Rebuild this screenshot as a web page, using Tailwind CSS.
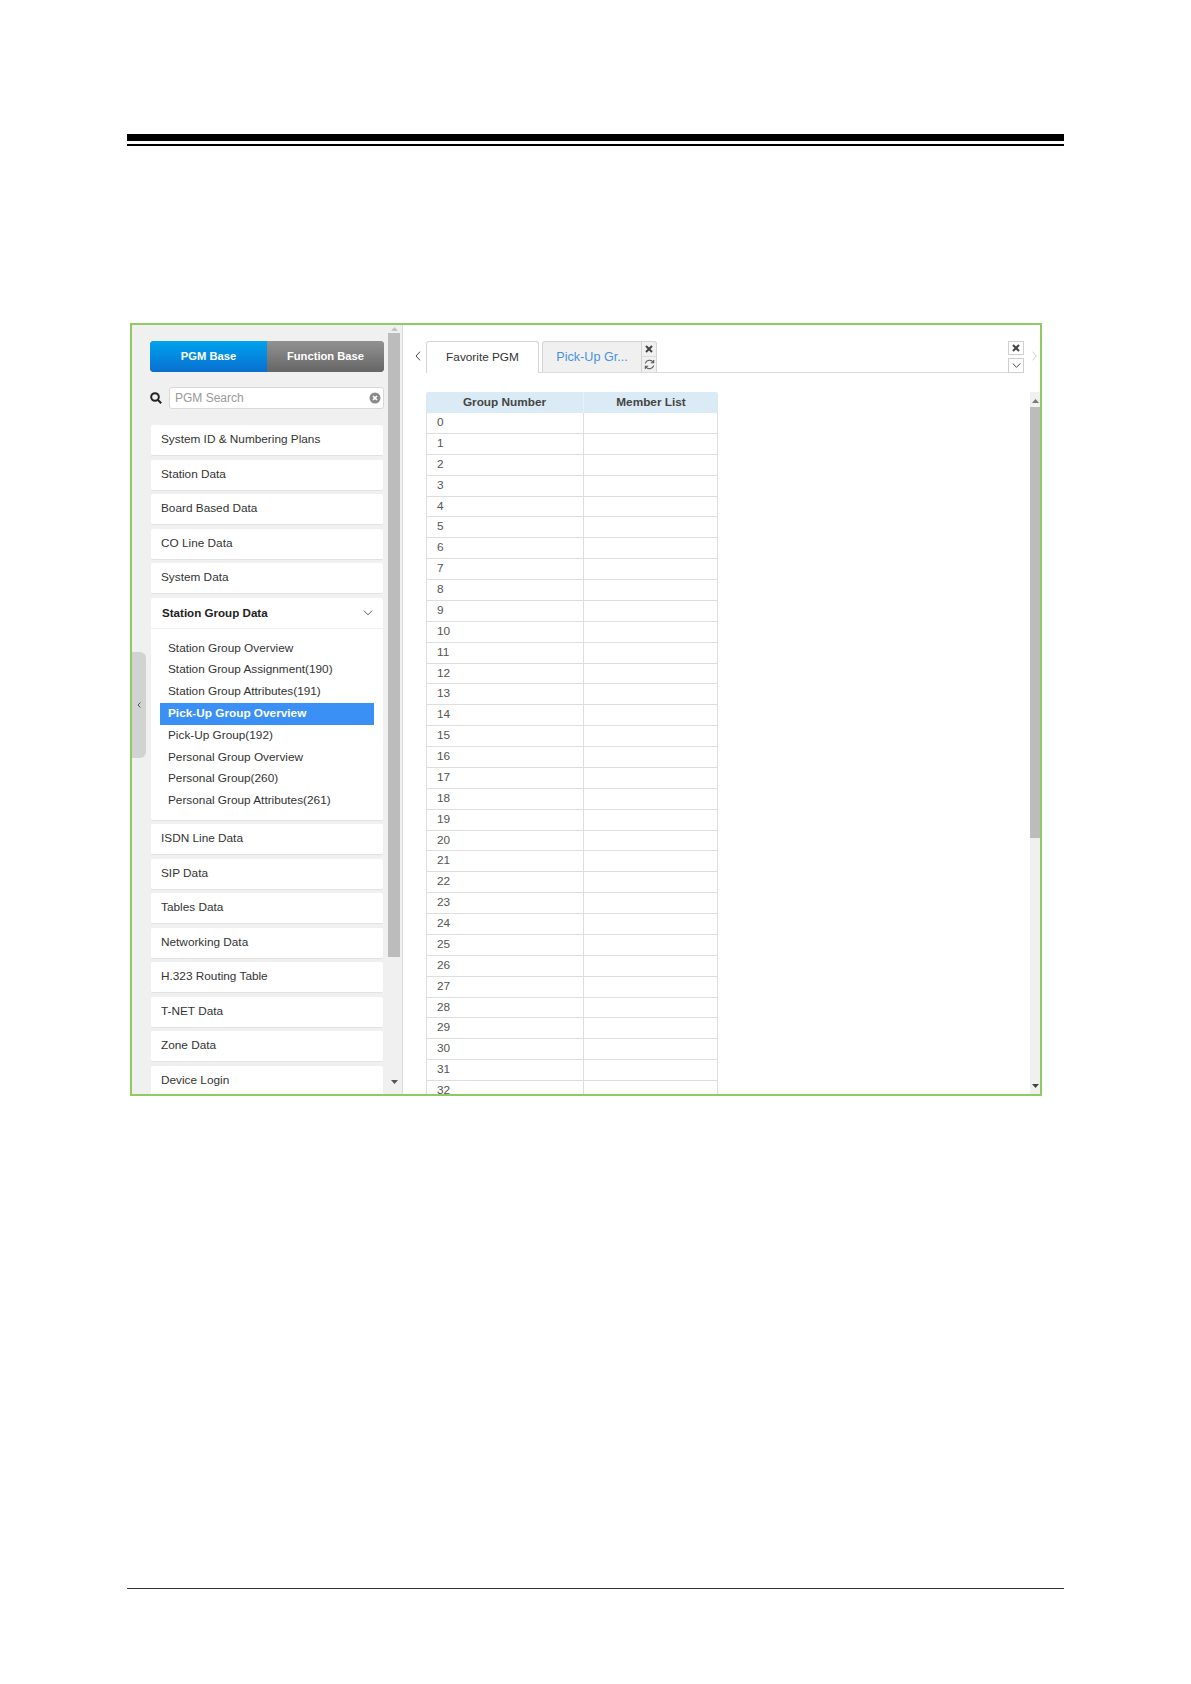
<!DOCTYPE html>
<html lang="en">
  <head>
    <meta charset="UTF-8" />
    <title>Pick-Up Group Overview</title>
    <script src="https://cdn.jsdelivr.net/npm/@tailwindcss/browser@4"></script>
  </head>
  <body class="bg-white w-[1191px] h-[1684px] overflow-hidden font-['Liberation_Sans',Arial,sans-serif] text-[11.8px] text-[#333]">
    <div class="flex flex-col h-full px-[127px] pt-[134px]">
      <!-- Page rule -->
      <div class="h-[7px] bg-black"></div>
      <div class="h-[2px] bg-black mt-[3px]"></div>

      <!-- Screenshot frame -->
      <div class="relative flex w-[912px] h-[773px] ml-[3px] mt-[177px] border-2 border-[#8fcb62] overflow-hidden">
        <!-- Sidebar -->
        <div class="flex w-[271px] h-full bg-[#f0f0f0] border-r border-[#dcdcdc] shrink-0">
          <div class="w-[256px] shrink-0 pl-[18px] pt-[16px] overflow-hidden">
            <div class="flex w-[234px] h-[31px] rounded-[4px] overflow-hidden text-white font-bold text-[11.2px] bg-[#777]">
              <div class="w-[117px] h-[31px] flex items-center justify-center bg-gradient-to-b from-[#00a3ee] to-[#0a6fd0]">PGM Base</div>
              <div class="w-[117px] h-[31px] flex items-center justify-center bg-gradient-to-b from-[#929292] to-[#666666]">Function Base</div>
            </div>
            <div class="flex items-center w-[234px] mt-[15px]">
              <svg class="w-[12px] h-[12px] shrink-0" viewBox="0 0 12 12" fill="none" stroke="#222" stroke-width="2">
                <circle cx="5" cy="5" r="3.8" />
                <path d="M8 8l3.2 3.2" />
              </svg>
              <div class="flex items-center justify-between ml-[7px] flex-1 h-[22px] bg-white border border-[#d8d8d8] rounded-[3px] pl-[5px] pr-[2px] text-[#9a9a9a] text-[12px]">
                <span>PGM Search</span>
                <svg class="w-[12px] h-[12px]" viewBox="0 0 12 12">
                  <circle cx="6" cy="6" r="5.5" fill="#8a8a8a" />
                  <path d="M4 4l4 4M8 4l-4 4" stroke="#fff" stroke-width="1.6" />
                </svg>
              </div>
            </div>

            <div class="flex flex-col gap-[3.5px] w-[232px] ml-[1px] mt-[16px]">
              <div class="h-[31px] shrink-0 flex items-center pl-[10px] bg-white rounded-[2px] border-b border-[#e2e2e2]">System ID &amp; Numbering Plans</div>
              <div class="h-[31px] shrink-0 flex items-center pl-[10px] bg-white rounded-[2px] border-b border-[#e2e2e2]">Station Data</div>
              <div class="h-[31px] shrink-0 flex items-center pl-[10px] bg-white rounded-[2px] border-b border-[#e2e2e2]">Board Based Data</div>
              <div class="h-[31px] shrink-0 flex items-center pl-[10px] bg-white rounded-[2px] border-b border-[#e2e2e2]">CO Line Data</div>
              <div class="h-[31px] shrink-0 flex items-center pl-[10px] bg-white rounded-[2px] border-b border-[#e2e2e2]">System Data</div>

              <!-- Expanded group -->
              <div class="h-[223px] shrink-0 bg-white rounded-[2px] border-b border-[#e2e2e2]">
                <div class="flex items-center justify-between h-[31px] pl-[11px] pr-[10px] border-b border-[#f0f0f0] font-bold text-[#222] text-[11.6px]">
                  <span>Station Group Data</span>
                  <svg class="w-[10px] h-[6px]" viewBox="0 0 10 6" fill="none" stroke="#555" stroke-width="1">
                    <path d="M1 .8l4 4 4-4" />
                  </svg>
                </div>
                <div class="flex flex-col mt-[9px] ml-[9px] w-[214px]">
                  <div class="h-[21.8px] flex items-center pl-[8px]">Station Group Overview</div>
                  <div class="h-[21.8px] flex items-center pl-[8px]">Station Group Assignment(190)</div>
                  <div class="h-[21.8px] flex items-center pl-[8px]">Station Group Attributes(191)</div>
                  <div class="h-[21.8px] flex items-center pl-[8px] bg-[#3a90f5] text-white font-bold text-[11.8px]">Pick-Up Group Overview</div>
                  <div class="h-[21.8px] flex items-center pl-[8px]">Pick-Up Group(192)</div>
                  <div class="h-[21.8px] flex items-center pl-[8px]">Personal Group Overview</div>
                  <div class="h-[21.8px] flex items-center pl-[8px]">Personal Group(260)</div>
                  <div class="h-[21.8px] flex items-center pl-[8px]">Personal Group Attributes(261)</div>
                </div>
              </div>

              <div class="h-[31px] shrink-0 flex items-center pl-[10px] bg-white rounded-[2px] border-b border-[#e2e2e2]">ISDN Line Data</div>
              <div class="h-[31px] shrink-0 flex items-center pl-[10px] bg-white rounded-[2px] border-b border-[#e2e2e2]">SIP Data</div>
              <div class="h-[31px] shrink-0 flex items-center pl-[10px] bg-white rounded-[2px] border-b border-[#e2e2e2]">Tables Data</div>
              <div class="h-[31px] shrink-0 flex items-center pl-[10px] bg-white rounded-[2px] border-b border-[#e2e2e2]">Networking Data</div>
              <div class="h-[31px] shrink-0 flex items-center pl-[10px] bg-white rounded-[2px] border-b border-[#e2e2e2]">H.323 Routing Table</div>
              <div class="h-[31px] shrink-0 flex items-center pl-[10px] bg-white rounded-[2px] border-b border-[#e2e2e2]">T-NET Data</div>
              <div class="h-[31px] shrink-0 flex items-center pl-[10px] bg-white rounded-[2px] border-b border-[#e2e2e2]">Zone Data</div>
              <div class="h-[31px] shrink-0 flex items-center pl-[10px] bg-white rounded-[2px]">Device Login</div>
            </div>
          </div>
          <!-- Sidebar scrollbar -->
          <div class="flex flex-col items-center w-[12px] h-full">
            <svg class="w-[7px] h-[4px] mt-[2px]" viewBox="0 0 7 4"><path d="M3.5 0L7 4H0z" fill="#c4c4c4" /></svg>
            <div class="w-full h-[624px] mt-[2px] bg-[#bcbcbc]"></div>
            <svg class="w-[7px] h-[4px] mt-[123px]" viewBox="0 0 7 4"><path d="M0 0h7L3.5 4z" fill="#555" /></svg>
          </div>
        </div>

        <!-- Collapse handle -->
        <div class="absolute left-0 top-[327px] flex items-center justify-center w-[14px] h-[106px] bg-[#d2d2d2] rounded-r-[6px]">
          <svg class="w-[4px] h-[6px]" viewBox="0 0 4 6" fill="none" stroke="#555" stroke-width="1"><path d="M3.4.5L1 3l2.4 2.5" /></svg>
        </div>

        <!-- Main panel -->
        <div class="flex flex-col flex-1 min-w-0 bg-white">
          <div class="flex items-start h-[47px] pt-[16px] shrink-0">
            <svg class="w-[6px] h-[10px] ml-[12px] mt-[10px] mr-[5px] shrink-0" viewBox="0 0 6 10" fill="none" stroke="#444" stroke-width="1"><path d="M5 .7L1 5l4 4.3" /></svg>
            <div class="flex flex-1 h-[32px] border-b border-[#dcdcdc]">
              <div class="flex items-center justify-center w-[113px] h-[32px] bg-white border border-b-0 border-[#d4d4d4] rounded-t-[3px] text-[#333]">Favorite PGM</div>
              <div class="flex w-[115px] h-[31px] ml-[3px] bg-[#f0f0f0] border border-b-0 border-[#d4d4d4] rounded-t-[3px]">
                <div class="flex items-center justify-center flex-1 text-[#4a90e2] text-[12.6px]">Pick-Up Gr...</div>
                <div class="flex flex-col w-[15px] border-l border-[#d4d4d4]">
                  <div class="flex items-center justify-center h-[15px] border-b border-[#dcdcdc]">
                    <svg class="w-[8px] h-[8px]" viewBox="0 0 8 8" stroke="#444" stroke-width="2"><path d="M1 1l6 6M7 1L1 7" /></svg>
                  </div>
                  <div class="flex items-center justify-center flex-1">
                    <svg class="w-[11px] h-[11px]" viewBox="0 0 10 10" fill="none" stroke="#555" stroke-width="1">
                      <path d="M1.2 4A4 4 0 0 1 8.4 3M8.8 6A4 4 0 0 1 1.6 7" />
                      <path d="M8.8 .8v2.6H6.2M1.2 9.2V6.6h2.6" />
                    </svg>
                  </div>
                </div>
              </div>
            </div>
            <div class="flex flex-col gap-[3px] w-[16px] shrink-0">
              <div class="flex items-center justify-center h-[14px] border border-[#cfcfcf]">
                <svg class="w-[8px] h-[8px]" viewBox="0 0 8 8" stroke="#444" stroke-width="2"><path d="M1 1l6 6M7 1L1 7" /></svg>
              </div>
              <div class="flex items-center justify-center h-[15px] border border-[#cfcfcf]">
                <svg class="w-[9px] h-[5px]" viewBox="0 0 9 5" fill="none" stroke="#444" stroke-width="1"><path d="M.7.5l3.8 3.8L8.3.5" /></svg>
              </div>
            </div>
            <svg class="w-[5px] h-[10px] ml-[8px] mt-[10px] mr-[3px] shrink-0" viewBox="0 0 5 10" fill="none" stroke="#cfcfcf" stroke-width="1"><path d="M.7.7L4.3 5 .7 9.3" /></svg>
          </div>

          <div class="flex flex-1 min-h-0 mt-[20px] overflow-hidden">
            <div class="flex-1 pl-[23px] overflow-hidden">
              <div class="w-[292px]">
                <div class="flex h-[21px] bg-[#daebf6] rounded-t-[2px] font-bold text-[#444] text-[11.8px]">
                  <div class="w-[158px] flex items-center justify-center border-r border-[#e8f1f8]">Group Number</div>
                  <div class="flex-1 flex items-center justify-center">Member List</div>
                </div>
                <div id="rows"></div>
              </div>
            </div>
            <!-- Content scrollbar -->
            <div class="flex flex-col items-center w-[10px] h-full bg-[#f0f0f0] shrink-0">
              <svg class="w-[7px] h-[4px] mt-[7px]" viewBox="0 0 7 4"><path d="M3.5 0L7 4H0z" fill="#777" /></svg>
              <div class="w-full h-[431px] mt-[4px] bg-[#bcbcbc]"></div>
              <svg class="w-[7px] h-[4px] mt-[246px]" viewBox="0 0 7 4"><path d="M0 0h7L3.5 4z" fill="#444" /></svg>
            </div>
          </div>
        </div>
      </div>

      <!-- Footer rule -->
      <div class="h-[1px] bg-[#333] mt-[492px]"></div>
    </div>

    <script>
      const rows = document.getElementById("rows");
      for (let i = 0; i <= 32; i++) {
        const row = document.createElement("div");
        row.className = "flex h-[20.875px] border-b border-[#dedede] text-[#555] text-[11.8px]";
        row.innerHTML = `<div class="w-[158px] flex items-center pl-[10px] border-l border-r border-[#dedede]">${i}</div><div class="flex-1 border-r border-[#dedede]"></div>`;
        rows.appendChild(row);
      }
    </script>
  </body>
</html>
